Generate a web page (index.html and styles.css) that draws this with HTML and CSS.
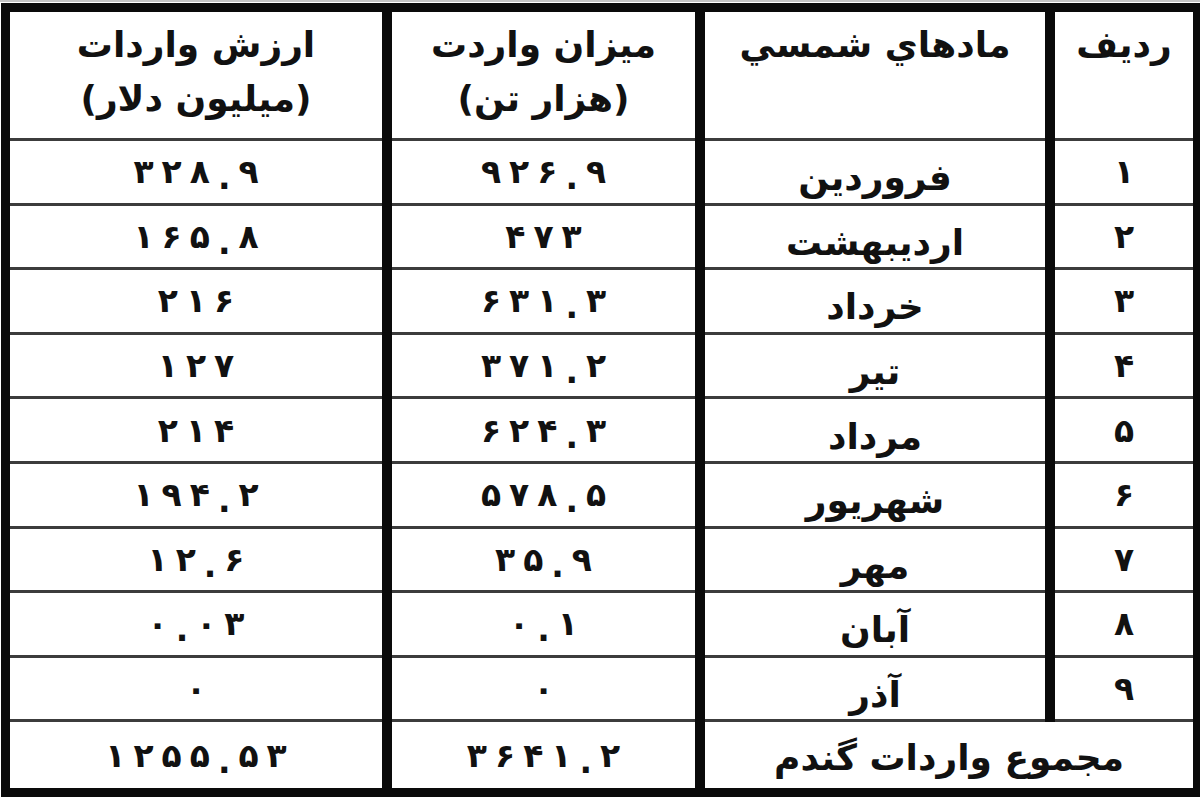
FILE: index.html
```html
<!DOCTYPE html>
<html lang="fa">
<head>
<meta charset="utf-8">
<title>واردات گندم</title>
<link rel="stylesheet" href="styles.css">
</head>
<body>
<div class="sheet" dir="rtl">
  <div class="cell head">ردیف</div>
  <div class="cell head">مادهاي شمسي</div>
  <div class="cell head">میزان واردت<br>(هزار تن)</div>
  <div class="cell head">ارزش واردات<br>(میلیون دلار)</div>

  <div class="cell num">۱</div>
  <div class="cell month">فروردین</div>
  <div class="cell num"><span class="d">۹</span><span class="d">۲</span><span class="d">۶</span><span class="d dot">.</span><span class="d">۹</span></div>
  <div class="cell num"><span class="d">۳</span><span class="d">۲</span><span class="d">۸</span><span class="d dot">.</span><span class="d">۹</span></div>

  <div class="cell num">۲</div>
  <div class="cell month">اردیبهشت</div>
  <div class="cell num"><span class="d">۴</span><span class="d">۷</span><span class="d">۳</span></div>
  <div class="cell num"><span class="d">۱</span><span class="d">۶</span><span class="d">۵</span><span class="d dot">.</span><span class="d">۸</span></div>

  <div class="cell num">۳</div>
  <div class="cell month">خرداد</div>
  <div class="cell num"><span class="d">۶</span><span class="d">۳</span><span class="d">۱</span><span class="d dot">.</span><span class="d">۳</span></div>
  <div class="cell num"><span class="d">۲</span><span class="d">۱</span><span class="d">۶</span></div>

  <div class="cell num">۴</div>
  <div class="cell month">تیر</div>
  <div class="cell num"><span class="d">۳</span><span class="d">۷</span><span class="d">۱</span><span class="d dot">.</span><span class="d">۲</span></div>
  <div class="cell num"><span class="d">۱</span><span class="d">۲</span><span class="d">۷</span></div>

  <div class="cell num">۵</div>
  <div class="cell month">مرداد</div>
  <div class="cell num"><span class="d">۶</span><span class="d">۲</span><span class="d">۴</span><span class="d dot">.</span><span class="d">۳</span></div>
  <div class="cell num"><span class="d">۲</span><span class="d">۱</span><span class="d">۴</span></div>

  <div class="cell num">۶</div>
  <div class="cell month">شهریور</div>
  <div class="cell num"><span class="d">۵</span><span class="d">۷</span><span class="d">۸</span><span class="d dot">.</span><span class="d">۵</span></div>
  <div class="cell num"><span class="d">۱</span><span class="d">۹</span><span class="d">۴</span><span class="d dot">.</span><span class="d">۲</span></div>

  <div class="cell num">۷</div>
  <div class="cell month">مهر</div>
  <div class="cell num"><span class="d">۳</span><span class="d">۵</span><span class="d dot">.</span><span class="d">۹</span></div>
  <div class="cell num"><span class="d">۱</span><span class="d">۲</span><span class="d dot">.</span><span class="d">۶</span></div>

  <div class="cell num">۸</div>
  <div class="cell month">آبان</div>
  <div class="cell num"><span class="d">۰</span><span class="d dot">.</span><span class="d">۱</span></div>
  <div class="cell num"><span class="d">۰</span><span class="d dot">.</span><span class="d">۰</span><span class="d">۳</span></div>

  <div class="cell num">۹</div>
  <div class="cell month">آذر</div>
  <div class="cell num">۰</div>
  <div class="cell num">۰</div>

  <div class="cell total last">مجموع واردات گندم</div>
  <div class="cell num last"><span class="d">۳</span><span class="d">۶</span><span class="d">۴</span><span class="d">۱</span><span class="d dot">.</span><span class="d">۲</span></div>
  <div class="cell num last"><span class="d">۱</span><span class="d">۲</span><span class="d">۵</span><span class="d">۵</span><span class="d dot">.</span><span class="d">۵</span><span class="d">۳</span></div>
</div>
</body>
</html>
```
FILE: styles.css
```css
html {
  background: #ffffff;
}

body {
  margin: 0;
  height: 800px;
  box-sizing: border-box;
  border-top: 2px solid #c4c4c4;
  padding-top: 1px;
  padding-left: 1px;
  background: #ffffff;
  font-family: "DejaVu Sans", sans-serif;
  font-weight: bold;
  color: #111111;
}

.sheet {
  width: 1199px;
  height: 794px;
  box-sizing: border-box;
  border-style: solid;
  border-color: #0a0a0a;
  border-width: 9px 7px 9px 9px;
  background: #0a0a0a;
  display: grid;
  grid-template-columns: 138px 340px 303px 372px;
  grid-template-rows: 129px repeat(9, 64.6px) 1fr;
  column-gap: 10px;
  row-gap: 0;
}

.cell {
  background: #ffffff;
  border-bottom: 3px solid #3c3c3c;
  box-sizing: border-box;
  display: flex;
  align-items: center;
  justify-content: center;
  text-align: center;
  font-size: 36px;
}

.head {
  align-items: flex-start;
  padding-top: 6px;
  line-height: 54px;
}

.num {
  font-size: 33px;
  direction: ltr;
}

.d {
  padding: 0 4px;
}

.dot {
  margin-top: 12px;
}

.month {
  padding-top: 12px;
}

.last {
  border-bottom: none;
}

.total {
  grid-column: span 2;
  padding-top: 4px;
}
```
